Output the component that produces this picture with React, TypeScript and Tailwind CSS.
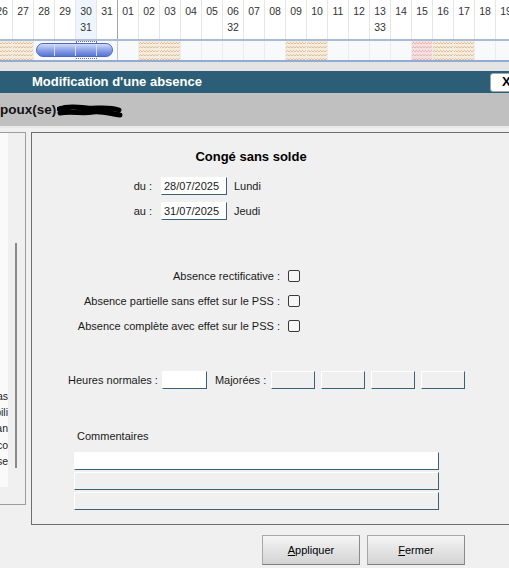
import React from 'react';

const days = ['26', '27', '28', '29', '30', '31', '01', '02', '03', '04', '05', '06', '07', '08', '09', '10', '11', '12', '13', '14', '15', '16', '17', '18', '19', '20'];
const weeks: Record<string, string> = { '30': '31', '06': '32', '13': '33' };
// w = week-end, h = jour férié
const hatch: Record<string, 'w' | 'h'> = { '26': 'w', '27': 'w', '02': 'w', '03': 'w', '09': 'w', '10': 'w', '15': 'h', '16': 'w', '17': 'w' };

const Hatch: React.FC<{ kind: 'w' | 'h' }> = ({ kind }) => {
  const id = kind === 'w' ? 'hatch-w' : 'hatch-h';
  const bg = kind === 'w' ? '#f7ebdb' : '#f8dfdf';
  const line = kind === 'w' ? '#cfae88' : '#d9a3a3';
  return (
    <svg className="absolute inset-0 w-full h-full" preserveAspectRatio="none">
      <defs>
        <pattern id={id} width="6" height="4" patternUnits="userSpaceOnUse">
          <rect width="6" height="4" fill={bg} />
          <path d="M0 3 L1.5 1.4 L3 3 L4.5 1.4 L6 3" fill="none" stroke={line} strokeWidth="0.7" />
        </pattern>
      </defs>
      <rect width="100%" height="100%" fill={`url(#${id})`} />
    </svg>
  );
};

const Calendar = () => (
  <div className="bg-white">
    {/* Header: days + week numbers */}
    <div className="flex h-[41px] -ml-[8px] border-b-2 border-[#a9bbd8]">
      {days.map((d) => (
        <div
          key={d}
          className={`w-[21px] shrink-0 flex flex-col items-center pt-[3px] text-[10.5px] leading-[16px] text-[#333] border-r ${
            d === '31' ? 'border-[#a3a3a3]' : 'border-[#e6e6e6]'
          } ${d === '30' ? 'bg-[#eef5fc]' : ''}`}
        >
          <span>{d}</span>
          {weeks[d] && <span>{weeks[d]}</span>}
        </div>
      ))}
    </div>
    {/* Event row */}
    <div className="relative flex h-[21px] -ml-[8px] bg-[#f8f9fb] border-b-2 border-[#93aad2]">
      {days.map((d) => (
        <div
          key={d}
          className={`relative w-[21px] shrink-0 border-r ${d === '31' ? 'border-[#c4c4c4]' : 'border-[#ececec]'}`}
        >
          {hatch[d] && <Hatch kind={hatch[d]} />}
        </div>
      ))}
      {/* today marker */}
      <div className="absolute left-[84px] top-[0px] w-[21px] h-[18px] border border-dotted border-[#777]" />
      {/* absence bar */}
      <div className="absolute left-[44px] top-[2px] w-[77px] h-[14px] rounded-full border border-[#4d67c2] bg-gradient-to-b from-[#d2dcf8] via-[#8ea3e7] to-[#5574d6] flex overflow-hidden">
        <div className="w-[18px] border-r border-[#d6def6]" />
        <div className="w-[21px] border-r border-[#d6def6]" />
        <div className="w-[21px] border-r border-[#d6def6]" />
        <div className="flex-1" />
      </div>
    </div>
  </div>
);

const Field: React.FC<{ w: string; white?: boolean; children?: React.ReactNode }> = ({ w, white, children }) => (
  <div
    className={`${w} shrink-0 h-[18px] flex items-center px-[2px] border border-r-[#3a6175] border-b-[#3a6175] ${
      white ? 'bg-white border-t-white border-l-white' : 'bg-[#f0f0f0] border-t-white border-l-white'
    }`}
  >
    {children}
  </div>
);

const Check: React.FC<{ label: string }> = ({ label }) => (
  <div className="flex items-center h-[18px] whitespace-nowrap">
    <span className="w-[248px] shrink-0 text-right">{label}</span>
    <span className="ml-[8px] shrink-0 w-[12px] h-[12px] rounded-[2px] border border-[#3a3a3a] bg-[#f6f6f6]" />
  </div>
);

const Button: React.FC<{ accel: string; rest: string }> = ({ accel, rest }) => (
  <div className="w-[98px] h-[30px] flex items-center justify-center border border-[#a8a8a8] border-b-[#7d7d7d] border-r-[#8a8a8a] bg-gradient-to-b from-[#f5f5f5] to-[#d3d3d3] text-[11px] text-black">
    <span>
      <span className="underline">{accel}</span>
      {rest}
    </span>
  </div>
);

export default function App() {
  return (
    <div className="w-[509px] h-[568px] overflow-hidden bg-[#f0f0f0] font-['Liberation_Sans',Arial,sans-serif] text-[11px] text-[#1a1a1a]">
      <Calendar />
      <div className="h-[9px] bg-[#e4e4e4]" />

      {/* Dialog title bar */}
      <div className="h-[22px] bg-[#2c5f77] flex items-center justify-between">
        <span className="pl-[32px] text-white font-bold text-[13px]">Modification d'une absence</span>
        <div className="w-[22px] h-[19px] -mr-[3px] bg-white rounded-[3px] border border-[#9aa] flex items-center pl-[11px] text-[13px] font-bold text-black">
          X
        </div>
      </div>

      {/* Employee band */}
      <div className="h-[33px] bg-[#c0c0c0] flex items-center pt-[2px]">
        <span className="font-bold text-[13.5px] text-[#111]">poux(se)</span>
        <span className="relative ml-[2px] font-bold text-[13px] text-[#111]">
          B
          <svg className="absolute left-[-1px] top-[2px]" width="66" height="16" viewBox="0 0 66 16">
            <path d="M2 6 C10 3 20 4 30 5 C40 6 50 3 62 7 M3 10 C14 8 26 11 36 9 C46 8 54 11 63 12" fill="none" stroke="#000" strokeWidth="5" strokeLinecap="round" />
          </svg>
        </span>
      </div>

      <div className="h-[2px] bg-[#e9e9e9]" />

      {/* Content */}
      <div className="flex items-start pt-[4px] gap-[5px]">
        {/* Left list (cut off) */}
        <div className="relative w-[27px] shrink-0 h-[373px] -ml-px border border-[#9c9c9c] flex">
          <div className="w-[8px] h-[354px] bg-[#fafafa] flex flex-col items-end justify-end pb-[18px] overflow-hidden text-[10.5px] leading-[16.25px] text-[#222]">
            {['as', 'bili', 'an', 'co', 'se'].map((t) => (
              <div key={t} className="w-full flex justify-end whitespace-nowrap">{t}</div>
            ))}
          </div>
          <div className="flex-1 pl-[7px] pt-[110px]">
            <div className="w-[2px] h-[225px] bg-[#8a8a8a]" />
          </div>
        </div>

        {/* Main panel */}
        <div className="w-[500px] h-[393px] shrink-0 border border-[#6e6e6e]">
          <div className="w-[438px] flex flex-col whitespace-nowrap">
            <div className="pt-[16px] text-center font-bold text-[13px] leading-[16px] text-black">Congé sans solde</div>

            <div className="mt-[12px] flex flex-col gap-[7px]">
              <div className="flex items-center">
                <span className="w-[120px] shrink-0 text-right">du :</span>
                <div className="ml-[9px]"><Field w="w-[66px]" white>28/07/2025</Field></div>
                <span className="ml-[7px]">Lundi</span>
              </div>
              <div className="flex items-center">
                <span className="w-[120px] shrink-0 text-right">au :</span>
                <div className="ml-[9px]"><Field w="w-[66px]" white>31/07/2025</Field></div>
                <span className="ml-[7px]">Jeudi</span>
              </div>
            </div>

            <div className="mt-[47px] flex flex-col gap-[7px]">
              <Check label="Absence rectificative :" />
              <Check label="Absence partielle sans effet sur le PSS :" />
              <Check label="Absence complète avec effet sur le PSS :" />
            </div>

            <div className="mt-[36px] w-max flex items-center pl-[36px]">
              <span className="shrink-0">Heures normales :</span>
              <div className="ml-[4px]"><Field w="w-[45px]" white /></div>
              <span className="ml-[8px] shrink-0">Majorées :</span>
              <div className="ml-[5px] flex gap-[6px]">
                <Field w="w-[44px]" />
                <Field w="w-[44px]" />
                <Field w="w-[44px]" />
                <Field w="w-[44px]" />
              </div>
            </div>

            <div className="mt-[40px] pl-[45px] leading-[14px]">Commentaires</div>
            <div className="mt-[9px] pl-[42px] flex flex-col gap-[2px]">
              <Field w="w-[365px]" white />
              <Field w="w-[365px]" />
              <Field w="w-[365px]" />
            </div>
          </div>
        </div>
      </div>

      {/* Buttons */}
      <div className="mt-[10px] pl-[262px] flex gap-[7px]">
        <Button accel="A" rest="ppliquer" />
        <Button accel="F" rest="ermer" />
      </div>
    </div>
  );
}
